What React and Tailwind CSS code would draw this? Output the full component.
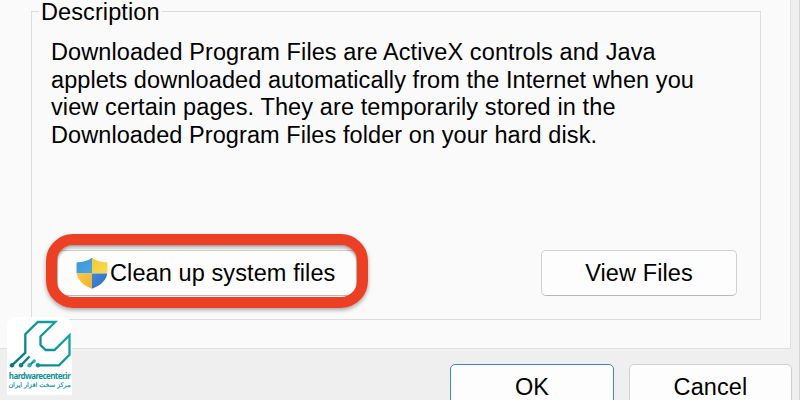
const lines = [
  { text: 'Downloaded Program Files are ActiveX controls and Java', tracking: 'tracking-[0.095px]' },
  { text: 'applets downloaded automatically from the Internet when you', tracking: 'tracking-[0.07px]' },
  { text: 'view certain pages. They are temporarily stored in the', tracking: 'tracking-[0.11px]' },
  { text: 'Downloaded Program Files folder on your hard disk.', tracking: 'tracking-[0.08px]' },
]

function ShieldIcon() {
  return (
    <svg className="w-8 h-8 shrink-0" viewBox="0 0 32 32">
      <defs>
        <clipPath id="shield">
          <path d="M16 .7C12.300 3.600 6.800 5.200 1.700 5.200C.9 5.200 .5 5.500 .5 6.200V14C.5 22.500 7 28.500 16 31.700C25 28.500 31.500 22.500 31.500 14V6.200C31.500 5.500 31.100 5.200 30.300 5.200C25.200 5.200 19.700 3.600 16 .7Z" />
        </clipPath>
        <linearGradient id="blueTop" x1="0" y1="0" x2="1" y2="1">
          <stop offset="0" stopColor="#3e94d4" />
          <stop offset="1" stopColor="#4ba7e2" />
        </linearGradient>
        <linearGradient id="yellowTop" x1="0" y1="0" x2="1" y2="1">
          <stop offset="0" stopColor="#f3c83c" />
          <stop offset="1" stopColor="#fbdb4b" />
        </linearGradient>
        <linearGradient id="yellowBottom" x1="0" y1="0" x2="1" y2="1">
          <stop offset="0" stopColor="#f9cb45" />
          <stop offset="1" stopColor="#efae2f" />
        </linearGradient>
        <linearGradient id="blueBottom" x1="0" y1="0" x2="1" y2="1">
          <stop offset="0" stopColor="#4189da" />
          <stop offset="1" stopColor="#2a69bd" />
        </linearGradient>
      </defs>
      <g clipPath="url(#shield)">
        <rect width="16" height="16.500" fill="url(#blueTop)" />
        <rect x="16" width="16" height="16.500" fill="url(#yellowTop)" />
        <rect y="16.500" width="16" height="16" fill="url(#yellowBottom)" />
        <rect x="16" y="16.500" width="16" height="16" fill="url(#blueBottom)" />
      </g>
    </svg>
  )
}

function Watermark() {
  return (
    <div className="absolute left-[7px] top-[317px] w-[65px] h-[78px] flex flex-col items-center rounded-t-[9px] bg-white text-[#0e9397]">
      <svg className="block w-[65px] h-[53px] shrink-0" viewBox="7 317 65 53" fill="none">
        <defs>
          <linearGradient id="teal" gradientUnits="userSpaceOnUse" x1="12" y1="365" x2="70" y2="325">
            <stop offset="0" stopColor="#087780" />
            <stop offset="1" stopColor="#12a9ac" />
          </linearGradient>
        </defs>
        <g stroke="url(#teal)" strokeWidth="2.300">
          <path d="M12 365.300L25.300 352.700V334.300L37.800 322H55.300L40.500 336.500V345L45.700 350H54.500L69.500 335.300V354.700L59 365.300H38" />
          <path d="M21 365.300L29.600 356.400" />
          <path d="M29.500 365.300L34 361" />
        </g>
        <circle cx="12" cy="365.300" r="2.200" fill="#087780" />
        <circle cx="21" cy="365.300" r="2.200" fill="#0b858b" />
        <circle cx="29.500" cy="365.300" r="2.200" fill="#2fb0b0" />
        <circle cx="34.200" cy="361" r="1.700" fill="#2fb0b0" />
        <circle cx="38" cy="365.300" r="2.200" fill="#0e9397" />
      </svg>
      <p className="font-['Noto_Sans','Open_Sans',sans-serif] text-[8px] leading-[11px] font-bold tracking-[-0.58px] whitespace-nowrap">hardwarecenter.ir</p>
      <p dir="rtl" className="font-['DejaVu_Sans',sans-serif] text-[6.400px] leading-[9px] whitespace-nowrap [-webkit-text-stroke:0.2px_#0e9397]">مرکز سخت افزار ایران</p>
    </div>
  )
}

export default function App() {
  return (
    <div className="relative flex flex-col w-[800px] h-[400px] overflow-hidden bg-[#efefef] border-r border-[#d4d4d4] font-['Liberation_Sans',Arial,sans-serif] text-[23.500px] text-black">
      <div className="w-[791px] h-[349px] shrink-0 pl-[31px] bg-[#fafafa] border-r border-b border-[#e0e0e0]">
        <fieldset className="w-[730px] h-[320px] flex flex-col border border-[#dcdcdc]">
          <legend className="ml-[7px] px-[2px] h-[23px] leading-[25px] tracking-[0.1px]">Description</legend>
          <div className="mt-[16px] ml-[19px] leading-[27.600px]">
            {lines.map((line) => (
              <p key={line.text} className={`w-max whitespace-nowrap ${line.tracking}`}>{line.text}</p>
            ))}
          </div>
          <div className="flex justify-between mt-[101px] pl-[25px] pr-[23px]">
            <button className="flex items-center w-[300px] h-[46px] pl-[17.500px] gap-[2.500px] rounded-[5px] border border-[#cfcfcf] border-b-[#b8b8b8] bg-[#fdfdfd] whitespace-nowrap tracking-[0.1px]">
              <ShieldIcon />
              <span>Clean up system files</span>
            </button>
            <button className="w-[196px] h-[46px] rounded-[5px] border border-[#d0d0d0] border-b-[#b8b8b8] bg-[#fdfdfd] tracking-[0.1px]">View Files</button>
          </div>
        </fieldset>
      </div>

      <div className="flex gap-[15px] mt-[15px] ml-[450px]">
        <button className="w-[164px] h-[48px] shrink-0 rounded-[5px] border border-[#3f86d2] bg-[#fdfdfd]">OK</button>
        <button className="w-[163px] h-[48px] shrink-0 rounded-[5px] border border-[#d0d0d0] bg-[#fdfdfd] tracking-[0.1px]">Cancel</button>
      </div>

      {/* Highlight around the clean up button */}
      <div className="absolute left-[46px] top-[234px] w-[322px] h-[74px] rounded-[27px] border-[11px] border-[#ec4025] shadow-[0_2px_4px_rgba(0,0,0,0.35),inset_0_4px_2px_rgba(0,0,0,0.16),inset_0_1px_2px_rgba(0,0,0,0.3)]" />
      <Watermark />
    </div>
  )
}
